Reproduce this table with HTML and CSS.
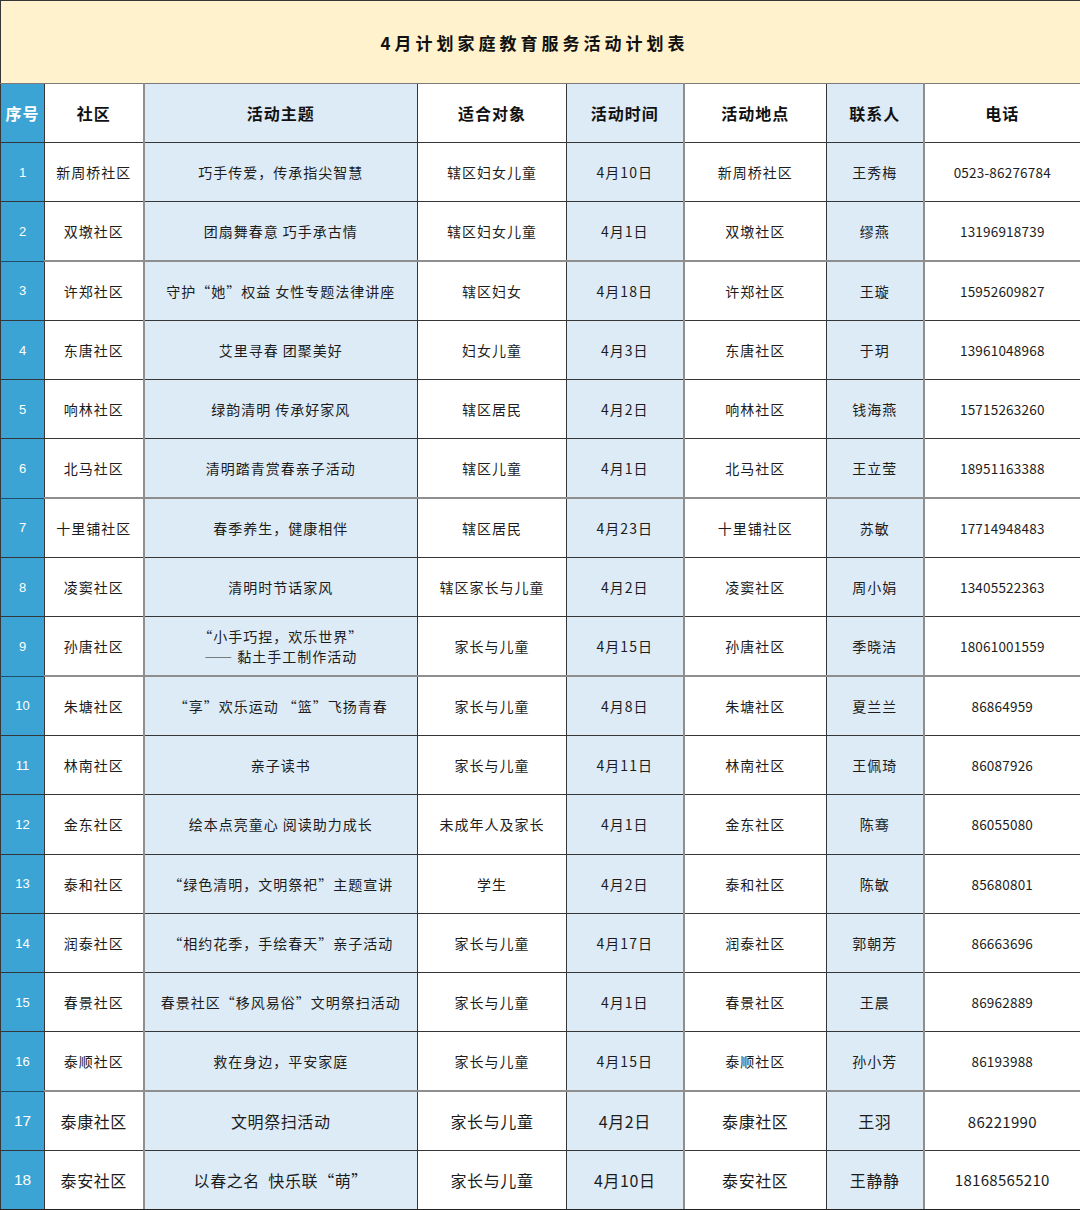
FILE: index.html
```html
<!DOCTYPE html>
<html lang="zh-CN">
<head>
<meta charset="utf-8">
<title>4月计划家庭教育服务活动计划表</title>
<link rel="stylesheet" href="styles.css">
</head>
<body>
<table class="plan">
  <colgroup>
    <col class="c-no">
    <col class="c-comm">
    <col class="c-theme">
    <col class="c-aud">
    <col class="c-time">
    <col class="c-place">
    <col class="c-person">
    <col class="c-phone">
  </colgroup>
  <thead>
    <tr class="title-row">
      <th colspan="8" class="title">4月计划家庭教育服务活动计划表</th>
    </tr>
    <tr class="head-row">
      <th class="no">序号</th>
      <th>社区</th>
      <th class="lb g">活动主题</th>
      <th>适合对象</th>
      <th class="lb">活动时间</th>
      <th class="g">活动地点</th>
      <th class="lb">联系人</th>
      <th class="g">电话</th>
    </tr>
  </thead>
  <tbody>
    <tr><td class="no">1</td><td>新周桥社区</td><td class="lb g">巧手传爱，传承指尖智慧</td><td>辖区妇女儿童</td><td class="lb">4月10日</td><td class="g">新周桥社区</td><td class="lb">王秀梅</td><td class="g num">0523-86276784</td></tr>
    <tr class="gsep"><td class="no">2</td><td>双墩社区</td><td class="lb g">团扇舞春意 巧手承古情</td><td>辖区妇女儿童</td><td class="lb">4月1日</td><td class="g">双墩社区</td><td class="lb">缪燕</td><td class="g num">13196918739</td></tr>
    <tr><td class="no">3</td><td>许郑社区</td><td class="lb g">守护“她”权益 女性专题法律讲座</td><td>辖区妇女</td><td class="lb">4月18日</td><td class="g">许郑社区</td><td class="lb">王璇</td><td class="g num">15952609827</td></tr>
    <tr><td class="no">4</td><td>东唐社区</td><td class="lb g">艾里寻春 团聚美好</td><td>妇女儿童</td><td class="lb">4月3日</td><td class="g">东唐社区</td><td class="lb">于玥</td><td class="g num">13961048968</td></tr>
    <tr><td class="no">5</td><td>响林社区</td><td class="lb g">绿韵清明 传承好家风</td><td>辖区居民</td><td class="lb">4月2日</td><td class="g">响林社区</td><td class="lb">钱海燕</td><td class="g num">15715263260</td></tr>
    <tr class="gsep"><td class="no">6</td><td>北马社区</td><td class="lb g">清明踏青赏春亲子活动</td><td>辖区儿童</td><td class="lb">4月1日</td><td class="g">北马社区</td><td class="lb">王立莹</td><td class="g num">18951163388</td></tr>
    <tr><td class="no">7</td><td>十里铺社区</td><td class="lb g">春季养生，健康相伴</td><td>辖区居民</td><td class="lb">4月23日</td><td class="g">十里铺社区</td><td class="lb">苏敏</td><td class="g num">17714948483</td></tr>
    <tr><td class="no">8</td><td>凌窦社区</td><td class="lb g">清明时节话家风</td><td>辖区家长与儿童</td><td class="lb">4月2日</td><td class="g">凌窦社区</td><td class="lb">周小娟</td><td class="g num">13405522363</td></tr>
    <tr class="gsep"><td class="no">9</td><td>孙唐社区</td><td class="lb g two">“小手巧捏，欢乐世界”<br>—— 黏土手工制作活动</td><td>家长与儿童</td><td class="lb">4月15日</td><td class="g">孙唐社区</td><td class="lb">季晓洁</td><td class="g num">18061001559</td></tr>
    <tr><td class="no">10</td><td>朱塘社区</td><td class="lb g">“享”欢乐运动 “篮”飞扬青春</td><td>家长与儿童</td><td class="lb">4月8日</td><td class="g">朱塘社区</td><td class="lb">夏兰兰</td><td class="g num">86864959</td></tr>
    <tr><td class="no">11</td><td>林南社区</td><td class="lb g">亲子读书</td><td>家长与儿童</td><td class="lb">4月11日</td><td class="g">林南社区</td><td class="lb">王佩琦</td><td class="g num">86087926</td></tr>
    <tr><td class="no">12</td><td>金东社区</td><td class="lb g">绘本点亮童心 阅读助力成长</td><td>未成年人及家长</td><td class="lb">4月1日</td><td class="g">金东社区</td><td class="lb">陈骞</td><td class="g num">86055080</td></tr>
    <tr><td class="no">13</td><td>泰和社区</td><td class="lb g">“绿色清明，文明祭祀”主题宣讲</td><td>学生</td><td class="lb">4月2日</td><td class="g">泰和社区</td><td class="lb">陈敏</td><td class="g num">85680801</td></tr>
    <tr><td class="no">14</td><td>润泰社区</td><td class="lb g">“相约花季，手绘春天”亲子活动</td><td>家长与儿童</td><td class="lb">4月17日</td><td class="g">润泰社区</td><td class="lb">郭朝芳</td><td class="g num">86663696</td></tr>
    <tr><td class="no">15</td><td>春景社区</td><td class="lb g">春景社区“移风易俗”文明祭扫活动</td><td>家长与儿童</td><td class="lb">4月1日</td><td class="g">春景社区</td><td class="lb">王晨</td><td class="g num">86962889</td></tr>
    <tr class="gsep"><td class="no">16</td><td>泰顺社区</td><td class="lb g">救在身边，平安家庭</td><td>家长与儿童</td><td class="lb">4月15日</td><td class="g">泰顺社区</td><td class="lb">孙小芳</td><td class="g num">86193988</td></tr>
    <tr class="big"><td class="no">17</td><td>泰康社区</td><td class="lb g">文明祭扫活动</td><td>家长与儿童</td><td class="lb">4月2日</td><td class="g">泰康社区</td><td class="lb">王羽</td><td class="g num">86221990</td></tr>
    <tr class="big"><td class="no">18</td><td>泰安社区</td><td class="lb g">以春之名&nbsp; 快乐联“萌”</td><td>家长与儿童</td><td class="lb">4月10日</td><td class="g">泰安社区</td><td class="lb">王静静</td><td class="g num">18168565210</td></tr>
  </tbody>
</table>
</body>
</html>
```
FILE: styles.css
```css
html, body {
  margin: 0;
  padding: 0;
  background: #ffffff;
}

.plan {
  width: 1080px;
  border-collapse: collapse;
  table-layout: fixed;
  font-family: "Noto Sans CJK SC", "Noto Sans", sans-serif;
  color: #1c1c1c;
}

.c-no { width: 44px; }
.c-comm { width: 99px; }
.c-theme { width: 274px; }
.c-aud { width: 149px; }
.c-time { width: 117px; }
.c-place { width: 143px; }
.c-person { width: 97px; }
.c-phone { width: 157px; }

.plan th,
.plan td {
  border: 1px solid #363636;
  padding: 0;
  text-align: center;
  vertical-align: middle;
  white-space: nowrap;
  overflow: hidden;
}

.title-row { height: 83px; }
.plan .title {
  background: #fff2cc;
  font-size: 17px;
  font-weight: 700;
  letter-spacing: 4px;
  color: #111;
  padding-right: 12px;
  border-bottom-color: #7a7a7a;
}

.head-row { height: 59px; }
.head-row th {
  font-size: 16px;
  font-weight: 700;
  letter-spacing: 1px;
  color: #111;
}

.plan tbody tr { height: 59.3px; }
.plan td {
  font-size: 14px;
  letter-spacing: 1px;
}

.plan .no {
  background: #3ba4d4;
  color: #ffffff;
  font-family: "Liberation Sans", Arial, sans-serif;
  font-size: 13px;
  letter-spacing: 0;
}
.plan th.no {
  font-family: "Noto Sans CJK SC", sans-serif;
  font-size: 16px;
  letter-spacing: 1px;
  font-weight: 700;
}

.plan .lb { background: #ddebf7; }

.plan .g { border-left: 2px solid #8e8e8e; }

.plan .num {
  letter-spacing: 0.2px;
  font-size: 13.5px;
}

.plan .two {
  line-height: 20px;
}

.plan tr.gsep td { border-bottom: 2px solid #8e8e8e; }
.plan tr.gsep td.no { border-bottom: 1px solid #1f4f66; }

.plan tr.big td {
  font-size: 16px;
  letter-spacing: 0.6px;
}
.plan tr.big td.no { font-size: 15.5px; letter-spacing: 0; }
.plan tr.big td.num { font-size: 15px; letter-spacing: 0.3px; }

.plan tbody tr:last-child td { border-bottom: 2px solid #222; }
```
